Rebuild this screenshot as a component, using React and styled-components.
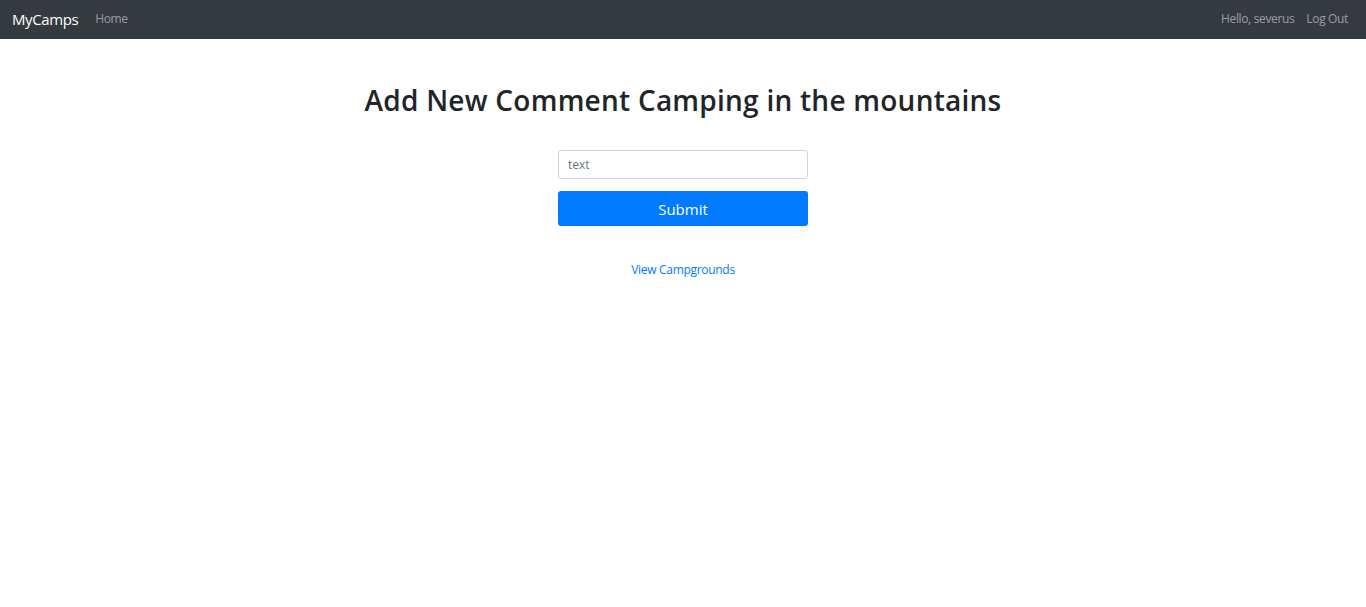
import React from "react";
import styled, { createGlobalStyle } from "styled-components";

const GlobalStyle = createGlobalStyle`
  html, body {
    margin: 0;
    padding: 0;
    background: #fff;
    font-family: "Open Sans", "Noto Sans", sans-serif;
    color: #212529;
  }
`;

export default function App() {
  return (
    <>
      <GlobalStyle />
      <StNavbar>
        <div className="nav_left">
          <StBrand href="#">MyCamps</StBrand>
          <StNavLink href="#">Home</StNavLink>
        </div>
        <div className="nav_right">
          <StNavLink href="#">Hello, severus</StNavLink>
          <StNavLink href="#">Log Out</StNavLink>
        </div>
      </StNavbar>
      <StMain>
        <StTitle>Add New Comment Camping in the mountains</StTitle>
        <StForm onSubmit={(e) => e.preventDefault()}>
          <StInput type="text" placeholder="text" />
          <StButton type="submit">Submit</StButton>
        </StForm>
        <StBackLink href="#">View Campgrounds</StBackLink>
      </StMain>
    </>
  );
}

const StNavbar = styled.nav`
  display: flex;
  justify-content: space-between;
  align-items: center;
  height: 39px;
  padding: 0 18px 2px 12px;
  box-sizing: border-box;
  background: #343a40;
  .nav_left,
  .nav_right {
    display: flex;
    align-items: center;
    gap: 0 12px;
  }
  .nav_left {
    gap: 0 17px;
  }
`;

const StBrand = styled.a`
  color: #fff;
  font-size: 15px;
  text-decoration: none;
  letter-spacing: -0.4px;
`;

const StNavLink = styled.a`
  color: rgba(255, 255, 255, 0.5);
  font-size: 12px;
  letter-spacing: -0.35px;
  text-decoration: none;
`;

const StMain = styled.main`
  display: flex;
  flex-direction: column;
  align-items: center;
  padding-top: 41px;
`;

const StTitle = styled.h1`
  margin: 0 0 30px;
  font-size: 28px;
  font-weight: 600;
  line-height: 40px;
  letter-spacing: 0.25px;
  color: #212529;
`;

const StForm = styled.form`
  display: flex;
  flex-direction: column;
  gap: 12px 0;
  width: 250px;
`;

const StInput = styled.input`
  height: 29px;
  padding: 0 9px;
  box-sizing: border-box;
  border: 1px solid #ced4da;
  border-radius: 3px;
  font-family: inherit;
  font-size: 12px;
  color: #495057;
  &::placeholder {
    color: #6c757d;
  }
`;

const StButton = styled.button`
  height: 35px;
  border: none;
  border-radius: 3px;
  background: #007bff;
  color: #fff;
  font-family: inherit;
  font-size: 15px;
  cursor: pointer;
`;

const StBackLink = styled.a`
  margin-top: 35px;
  color: #007bff;
  font-size: 12px;
  letter-spacing: -0.3px;
  text-decoration: none;
`;
